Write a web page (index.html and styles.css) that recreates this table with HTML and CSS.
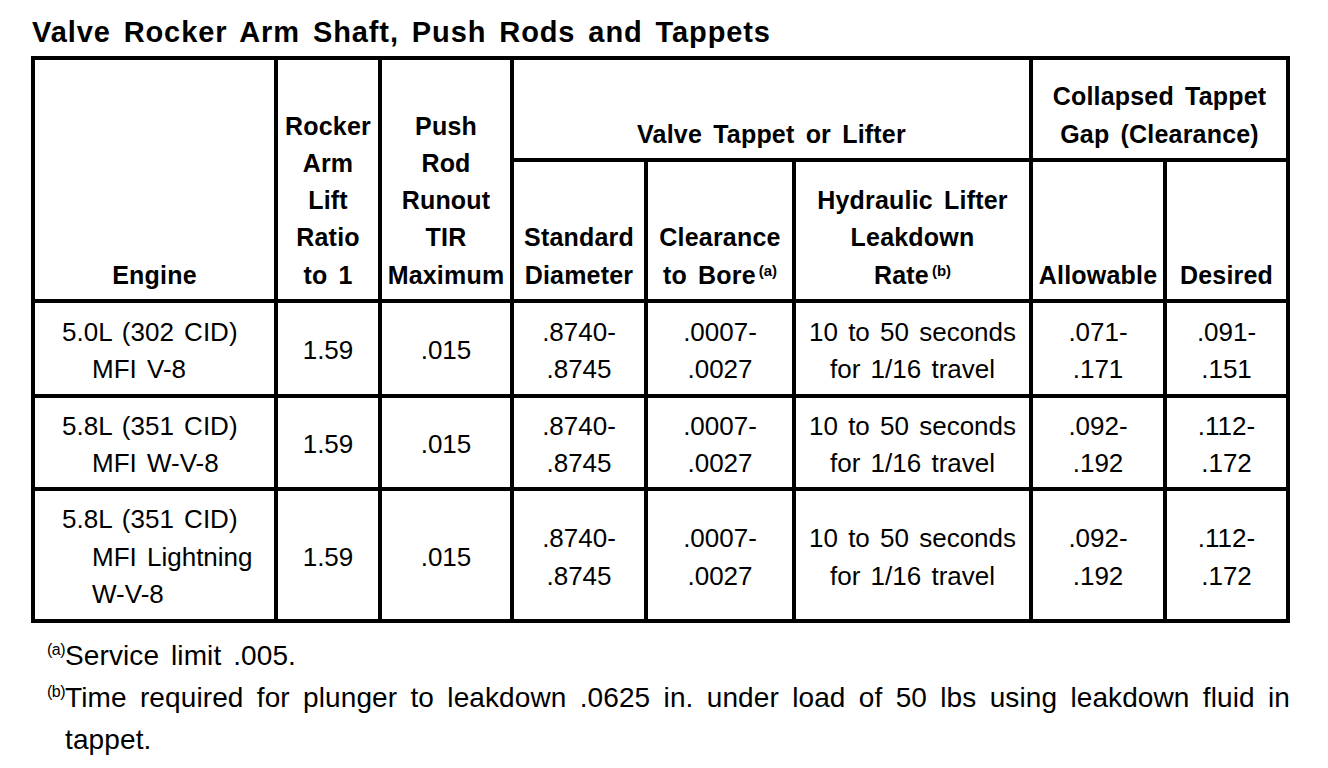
FILE: index.html
```html
<!DOCTYPE html>
<html lang="en">
<head>
<meta charset="utf-8">
<title>Valve Rocker Arm Shaft, Push Rods and Tappets</title>
<link rel="stylesheet" href="styles.css">
</head>
<body>
<main class="page">
  <h1 class="title">Valve Rocker Arm Shaft, Push Rods and Tappets</h1>
  <table class="spec">
    <colgroup>
      <col class="c-engine">
      <col class="c-ratio">
      <col class="c-push">
      <col class="c-dia">
      <col class="c-clear">
      <col class="c-leak">
      <col class="c-allow">
      <col class="c-desired">
    </colgroup>
    <thead>
      <tr class="h-top">
        <th rowspan="2">Engine</th>
        <th rowspan="2">Rocker<br>Arm<br>Lift<br>Ratio<br>to 1</th>
        <th rowspan="2">Push<br>Rod<br>Runout<br>TIR<br>Maximum</th>
        <th colspan="3">Valve Tappet or Lifter</th>
        <th colspan="2">Collapsed Tappet<br>Gap (Clearance)</th>
      </tr>
      <tr class="h-sub">
        <th>Standard<br>Diameter</th>
        <th>Clearance<br>to Bore<sup class="ref">(a)</sup></th>
        <th>Hydraulic Lifter<br>Leakdown<br>Rate<sup class="ref">(b)</sup></th>
        <th>Allowable</th>
        <th>Desired</th>
      </tr>
    </thead>
    <tbody>
      <tr class="r1">
        <td class="engine">5.0L (302 CID)<br>MFI V-8</td>
        <td>1.59</td>
        <td>.015</td>
        <td>.8740-<br>.8745</td>
        <td>.0007-<br>.0027</td>
        <td>10 to 50 seconds<br>for 1/16 travel</td>
        <td>.071-<br>.171</td>
        <td>.091-<br>.151</td>
      </tr>
      <tr class="r2">
        <td class="engine">5.8L (351 CID)<br>MFI W-V-8</td>
        <td>1.59</td>
        <td>.015</td>
        <td>.8740-<br>.8745</td>
        <td>.0007-<br>.0027</td>
        <td>10 to 50 seconds<br>for 1/16 travel</td>
        <td>.092-<br>.192</td>
        <td>.112-<br>.172</td>
      </tr>
      <tr class="r3">
        <td class="engine">5.8L (351 CID)<br>MFI Lightning<br>W-V-8</td>
        <td>1.59</td>
        <td>.015</td>
        <td>.8740-<br>.8745</td>
        <td>.0007-<br>.0027</td>
        <td>10 to 50 seconds<br>for 1/16 travel</td>
        <td>.092-<br>.192</td>
        <td>.112-<br>.172</td>
      </tr>
    </tbody>
  </table>
  <div class="notes">
    <div class="note">
      <span class="note-mark">(a)</span>
      <p class="note-text">Service limit .005.</p>
    </div>
    <div class="note">
      <span class="note-mark">(b)</span>
      <p class="note-text note-justify">Time required for plunger to leakdown .0625 in. under load of 50 lbs using leakdown fluid in<br>tappet.</p>
    </div>
  </div>
</main>
</body>
</html>
```

FILE: styles.css
```css
html, body {
  margin: 0;
  padding: 0;
  background: #ffffff;
}

body {
  color: #000000;
  font-family: "Liberation Sans", Arial, Helvetica, sans-serif;
}

.page {
  padding: 15px 0 0 31px;
}

.title {
  margin: 0 0 7px 1px;
  font-size: 29px;
  line-height: 34px;
  font-weight: 700;
  letter-spacing: 0.9px;
  word-spacing: 4px;
}

.spec {
  border-collapse: collapse;
  table-layout: fixed;
  width: 1259px;
  border: 4px solid #000;
}

.c-engine { width: 243px; }
.c-ratio { width: 104px; }
.c-push { width: 132px; }
.c-dia { width: 134px; }
.c-clear { width: 148px; }
.c-leak { width: 237px; }
.c-allow { width: 134px; }
.c-desired { width: 123px; }

.spec th,
.spec td {
  border: 4px solid #000;
  padding: 0;
  text-align: center;
}

.spec th {
  font-size: 25px;
  line-height: 37.3px;
  font-weight: 700;
  letter-spacing: 0.2px;
  word-spacing: 4px;
  vertical-align: bottom;
  padding-bottom: 5px;
}

.h-top { height: 102px; }
.h-sub { height: 141px; }
.r1 { height: 95px; }
.r2 { height: 93px; }
.r3 { height: 132px; }

.ref {
  font-size: 15px;
  line-height: 0;
  vertical-align: 8px;
  margin-left: 3px;
  font-weight: 700;
  letter-spacing: 0;
}

.spec td {
  font-size: 26px;
  line-height: 37.5px;
  font-weight: 400;
  word-spacing: 3px;
  vertical-align: middle;
  padding-top: 5px;
}

.spec td.engine {
  text-align: left;
  padding-left: 57px;
  text-indent: -30px;
}

.notes {
  margin: 12px 0 0 16px;
  width: 1243px;
}

.note {
  display: flex;
  align-items: flex-start;
}

.note-mark {
  flex: 0 0 15px;
  font-size: 16px;
  line-height: 16px;
  margin-top: 7px;
  letter-spacing: -0.5px;
}

.note-text {
  flex: 1 1 auto;
  margin: 0;
  font-size: 28px;
  line-height: 42px;
  word-spacing: 4px;
  letter-spacing: 0.1px;
}

.note-justify {
  text-align: justify;
  text-align-last: justify;
}
```
